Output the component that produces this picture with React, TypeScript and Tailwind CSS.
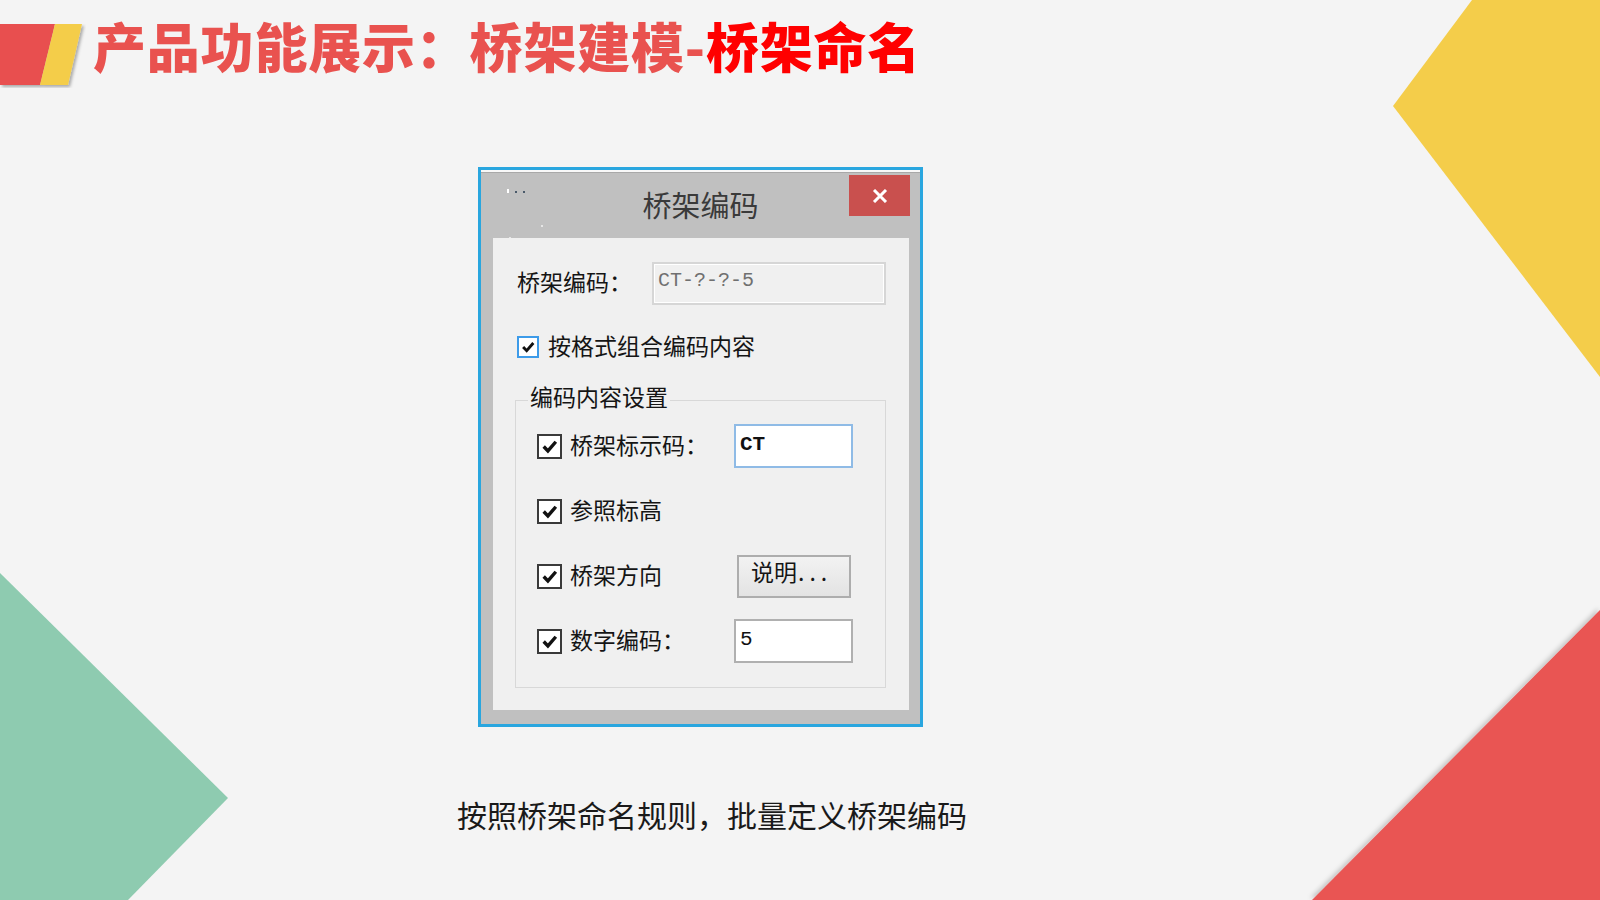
import React from "react";

const Check = () => (
  <svg viewBox="0 0 18 18" className="w-full h-full">
    <path d="M3.5 9 L7.5 13.2 L15 4.5" fill="none" stroke="#111" strokeWidth="3.2" strokeLinejoin="miter" strokeLinecap="butt" />
  </svg>
);

const Box = () => (
  <div className="w-[25px] h-[25px] shrink-0 border-2 border-[#3a3a3a] bg-white p-[1px]">
    <Check />
  </div>
);

export default function App() {
  const cjk = "font-['Noto_Sans_CJK_SC','Noto_Sans',sans-serif]";
  return (
    <div className={`relative w-[1600px] h-[900px] overflow-hidden bg-[#f4f4f4] ${cjk}`}>
      <svg className="absolute inset-0 pointer-events-none" width="1600" height="900" viewBox="0 0 1600 900">
        <defs>
          <filter id="sh" x="-20%" y="-20%" width="140%" height="140%">
            <feDropShadow dx="-2" dy="-2" stdDeviation="2" floodColor="#000" floodOpacity="0.18" />
          </filter>
          <filter id="sh2" x="-20%" y="-20%" width="140%" height="140%">
            <feDropShadow dx="2" dy="2" stdDeviation="1.5" floodColor="#000" floodOpacity="0.3" />
          </filter>
        </defs>
        <polygon points="1472,0 1600,0 1600,377 1393,106" fill="#f4cd4a" />
        <polygon points="0,573 228,798 128,900 0,900" fill="#8ecbb0" />
        <polygon points="1600,610 1600,900 1312,900" fill="#e95453" filter="url(#sh)" />
      </svg>

      <div className="relative flex flex-col">
        {/* header */}
        <div className="flex items-start pt-[24px]">
          <svg width="86" height="64" viewBox="0 0 86 64" className="shrink-0">
            <g filter="url(#sh2)">
              <polygon points="0,0 55,0 40,61 0,61" fill="#e8504f" />
              <polygon points="55,0 82,0 68,61 40,61" fill="#f4cd4a" />
            </g>
          </svg>
          <h1 className="ml-[7px] -mt-[5px] text-[53px] leading-[53px] font-black text-[#e9524f] tracking-[0.8px] whitespace-nowrap">
            产品功能展示：桥架建模-<span className="text-[#ff0000]">桥架命名</span>
          </h1>
        </div>

        {/* dialog */}
        <div className="ml-[478px] mt-[79px] w-[445px] h-[560px] border-[3px] border-[#29a6df] bg-[#c0c0c0] flex flex-col">
          <div className="h-[3px] bg-[#f8f8f8] border-b border-[#a8a8a8]" />
          <div className="h-[65px] grid grid-cols-[1fr_auto_1fr] items-start">
            <div className="pt-[14px] pl-[26px]">
              <svg width="60" height="56" viewBox="0 0 60 56">
                <rect x="0" y="2" width="2" height="4" fill="#fff" />
                <rect x="8" y="4" width="2" height="2" fill="#4a5a6a" />
                <rect x="16" y="4" width="2" height="2" fill="#4a5a6a" />
                <rect x="-12" y="30" width="2" height="2" fill="#e6e6e6" />
                <rect x="-10" y="36" width="2" height="2" fill="#e6e6e6" />
                <rect x="34" y="38" width="2" height="2" fill="#e6e6e6" />
                <rect x="-8" y="52" width="3" height="2" fill="#e6e6e6" />
                <rect x="2" y="50" width="2" height="2" fill="#e6e6e6" />
                <rect x="12" y="51" width="3" height="2" fill="#e6e6e6" />
                <rect x="22" y="52" width="2" height="2" fill="#e6e6e6" />
              </svg>
            </div>
            <div className="mt-[17px] text-[29px] leading-[29px] text-[#3a3a3a] whitespace-nowrap">桥架编码</div>
            <div className="justify-self-end mt-[2px] mr-[10px] w-[61px] h-[41px] bg-[#c9504e] flex items-center justify-center">
              <svg width="16" height="14" viewBox="0 0 16 14">
                <path d="M2 1 L14 13 M14 1 L2 13" stroke="#fff" strokeWidth="3" />
              </svg>
            </div>
          </div>

          <div className="ml-[12px] mr-[11px] h-[472px] bg-[#f0f0f0] flex flex-col text-[23px] leading-[28px] text-[#151515]">
            <div className="flex items-center h-[43px] mt-[24px] ml-[24px]">
              <span className="w-[135px] pb-[6px] whitespace-nowrap">桥架编码：</span>
              <div className="w-[234px] h-[43px] border-2 border-[#d6d6d6] bg-[#f0f0f0] shadow-[inset_0_0_0_1px_#ffffff] flex items-center pl-[4px] pb-[5px] font-['Liberation_Mono',monospace] text-[20px] text-[#707070]">
                CT-?-?-5
              </div>
            </div>

            <div className="flex items-center h-[28px] mt-[28px] ml-[24px] gap-[9px]">
              <div className="w-[22px] h-[22px] border-2 border-[#3d9be9] bg-white p-[1px]">
                <Check />
              </div>
              <span className="pb-[5px] whitespace-nowrap">按格式组合编码内容</span>
            </div>

            <fieldset className="mt-[25px] ml-[22px] w-[371px] border border-[#d8d8d8] m-0 p-0">
              <legend className="ml-[12px] px-[2px] text-[23px] leading-[28px] whitespace-nowrap">
                <span className="block -translate-y-[4px]">编码内容设置</span>
              </legend>
              <div className="flex flex-col gap-[21px] pt-[10px] pb-[24px] pl-[21px]">
                <div className="flex items-center h-[44px]">
                  <Box />
                  <span className="ml-[8px] w-[164px] pb-[5px] whitespace-nowrap">桥架标示码：</span>
                  <div className="w-[119px] h-[44px] border-2 border-[#8fbbe6] bg-white flex items-center pl-[4px] pb-[3px] font-['Liberation_Mono',monospace] text-[21px] font-bold text-[#111]">
                    CT
                  </div>
                </div>
                <div className="flex items-center h-[44px]">
                  <Box />
                  <span className="ml-[8px] pb-[5px] whitespace-nowrap">参照标高</span>
                </div>
                <div className="flex items-center h-[44px]">
                  <Box />
                  <span className="ml-[8px] w-[164px] pb-[5px] whitespace-nowrap">桥架方向</span>
                  <div className="ml-[3px] w-[114px] h-[43px] border-2 border-[#adadad] bg-[linear-gradient(#f2f2f2,#e3e3e3)] flex items-center pl-[12px] pb-[10px] whitespace-nowrap">
                    说明<span className="tracking-[5px] ml-[1px]">...</span>
                  </div>
                </div>
                <div className="flex items-center h-[44px]">
                  <Box />
                  <span className="ml-[8px] w-[164px] pb-[5px] whitespace-nowrap">数字编码：</span>
                  <div className="w-[119px] h-[44px] border-2 border-[#b0b0b0] bg-white flex items-center pl-[4px] pb-[3px] font-['Liberation_Mono',monospace] text-[21px] text-[#111]">
                    5
                  </div>
                </div>
              </div>
            </fieldset>
          </div>
        </div>

        {/* caption */}
        <div className="mt-[72px] ml-[457px] text-[30px] leading-[30px] text-[#1a1a1a] whitespace-nowrap">
          按照桥架命名规则，批量定义桥架编码
        </div>
      </div>
    </div>
  );
}
